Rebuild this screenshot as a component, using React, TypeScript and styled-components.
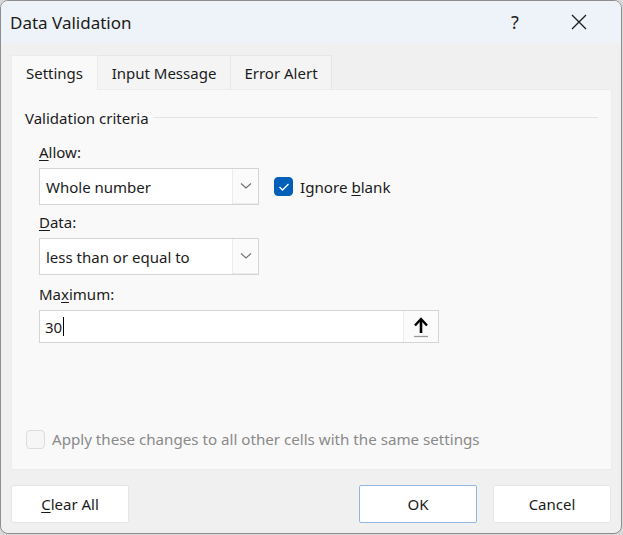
import React from "react";
import styled, { createGlobalStyle } from "styled-components";

const Global = createGlobalStyle`
  html, body { margin: 0; padding: 0; background: #d9d9d9; }
  body { font-family: "Noto Sans", "Open Sans", sans-serif; color: #1b1b1b; }
  * { box-sizing: border-box; }
`;

const Dialog = styled.div`
  width: 622px;
  height: 534px;
  background: #f0f0f0;
  border: 1px solid #8e8e8e;
  border-radius: 8px;
  overflow: hidden;
  display: flex;
  flex-direction: column;
`;

const TitleBar = styled.div`
  height: 42px;
  background: #eef3f9;
  display: flex;
  align-items: center;
  padding-left: 9px;
  padding-right: 10px;
  flex-shrink: 0;
`;

const Title = styled.div`
  font-size: 17px;
  flex: 1;
`;

const TitleButton = styled.div`
  width: 64px;
  height: 42px;
  display: flex;
  align-items: center;
  justify-content: center;
  font-size: 18px;
  color: #222;
`;

const Body = styled.div`
  flex: 1;
  display: flex;
  flex-direction: column;
  padding: 12px 10px 0 10px;
`;

const Tabs = styled.div`
  display: flex;
  height: 34px;
`;

const Tab = styled.div<{ $active?: boolean; $w: number }>`
  width: ${(p) => p.$w}px;
  display: flex;
  align-items: center;
  justify-content: center;
  font-size: 15px;
  background: ${(p) => (p.$active ? "#f9f9f9" : "#f4f4f4")};
  border: 1px solid ${(p) => (p.$active ? "#ececec" : "#e6e6e6")};
  border-bottom: none;
  margin-left: ${(p) => (p.$active ? 0 : -1)}px;
  position: relative;
  z-index: ${(p) => (p.$active ? 2 : 1)};
  ${(p) => (p.$active ? "margin-bottom: -1px; height: 35px;" : "")}
`;

const Panel = styled.div`
  height: 381px;
  width: 601px;
  background: #f9f9f9;
  border: 1px solid #ececec;
  display: flex;
  flex-direction: column;
  padding: 17px 13px 0 13px;
`;

const Legend = styled.div`
  display: flex;
  align-items: center;
  gap: 4px;
  font-size: 15px;
  height: 22px;
`;

const LegendLine = styled.div`
  flex: 1;
  height: 1px;
  background: #e3e3e3;
  margin-top: -2px;
`;

const Fields = styled.div`
  padding-left: 14px;
  display: flex;
  flex-direction: column;
`;

const Label = styled.div<{ $top: number }>`
  font-size: 15px;
  margin-top: ${(p) => p.$top}px;
  height: 22px;
  line-height: 22px;
  margin-bottom: 5px;
  u { text-underline-offset: 2px; }
`;

const Row = styled.div`
  display: flex;
  align-items: center;
  gap: 15px;
`;

const Combo = styled.div`
  width: 220px;
  height: 37px;
  background: #fff;
  border: 1px solid #d4d4d4;
  display: flex;
`;

const ComboText = styled.div`
  flex: 1;
  font-size: 15px;
  display: flex;
  align-items: center;
  padding-left: 6px;
`;

const ComboButton = styled.div`
  width: 26px;
  background: #fbfbfb;
  border-left: 1px solid #ececec;
  border-bottom: 1px solid #ececec;
  display: flex;
  align-items: center;
  justify-content: center;
`;

const Check = styled.div<{ $checked?: boolean }>`
  width: 19px;
  height: 19px;
  border-radius: 4px;
  background: ${(p) => (p.$checked ? "#005fb8" : "#f6f6f6")};
  border: 1px solid ${(p) => (p.$checked ? "#005fb8" : "#dcdcdc")};
  display: flex;
  align-items: center;
  justify-content: center;
  flex-shrink: 0;
`;

const CheckLabel = styled.label<{ $disabled?: boolean }>`
  display: flex;
  align-items: center;
  gap: 7px;
  font-size: 15.15px;
  color: ${(p) => (p.$disabled ? "#8a8a8a" : "#1b1b1b")};
  u { text-underline-offset: 2px; }
`;

const InputBox = styled.div`
  width: 400px;
  height: 33px;
  background: #fff;
  border: 1px solid #d4d4d4;
  display: flex;
`;

const InputText = styled.div`
  flex: 1;
  display: flex;
  align-items: center;
  padding-left: 5px;
  font-size: 15px;
`;

const Caret = styled.span`
  display: inline-block;
  width: 1px;
  height: 19px;
  background: #000;
  margin-left: 1px;
`;

const RefButton = styled.div`
  width: 35px;
  background: #fbfbfb;
  border-left: 1px solid #ececec;
  display: flex;
  align-items: center;
  justify-content: center;
`;

const Spacer = styled.div`
  flex: 1;
`;

const ApplyRow = styled.div`
  padding: 0 0 20px 1px;
`;

const Footer = styled.div`
  display: flex;
  align-items: flex-start;
  padding-top: 15px;
`;

const Button = styled.div<{ $primary?: boolean; $gap?: number }>`
  width: 118px;
  height: 38px;
  margin-left: ${(p) => p.$gap ?? 0}px;
  background: #fff;
  border: 1px solid ${(p) => (p.$primary ? "#93b8e0" : "#e5e5e5")};
  border-radius: 2px;
  display: flex;
  align-items: center;
  justify-content: center;
  font-size: 15px;
  u { text-underline-offset: 2px; }
`;

const Chevron = () => (
  <svg width="12" height="8" viewBox="0 0 12 8">
    <path d="M1 1.5 L6 6 L11 1.5" fill="none" stroke="#6e6e6e" strokeWidth="1.1" />
  </svg>
);

export default function App() {
  return (
    <>
      <Global />
      <Dialog>
        <TitleBar>
          <Title>Data Validation</Title>
          <TitleButton>?</TitleButton>
          <TitleButton>
            <svg width="18" height="18" viewBox="0 0 18 18">
              <path d="M2 2 L16 16 M16 2 L2 16" stroke="#1b1b1b" strokeWidth="1.3" />
            </svg>
          </TitleButton>
        </TitleBar>
        <Body>
          <Tabs>
            <Tab $active $w={87}>Settings</Tab>
            <Tab $w={134}>Input Message</Tab>
            <Tab $w={102}>Error Alert</Tab>
          </Tabs>
          <Panel>
            <Legend>
              Validation criteria
              <LegendLine />
            </Legend>
            <Fields>
              <Label $top={12}>
                <u>A</u>llow:
              </Label>
              <Row>
                <Combo>
                  <ComboText>Whole number</ComboText>
                  <ComboButton>
                    <Chevron />
                  </ComboButton>
                </Combo>
                <CheckLabel>
                  <Check $checked>
                    <svg width="12" height="10" viewBox="0 0 12 10">
                      <path d="M1.5 5 L4.5 8 L10.5 2" fill="none" stroke="#fff" strokeWidth="1.3" />
                    </svg>
                  </Check>
                  <span>
                    Ignore <u>b</u>lank
                  </span>
                </CheckLabel>
              </Row>
              <Label $top={6}>
                <u>D</u>ata:
              </Label>
              <Combo>
                <ComboText>less than or equal to</ComboText>
                <ComboButton>
                  <Chevron />
                </ComboButton>
              </Combo>
              <Label $top={8}>
                Ma<u>x</u>imum:
              </Label>
              <InputBox>
                <InputText>
                  30
                  <Caret />
                </InputText>
                <RefButton>
                  <svg width="18" height="22" viewBox="0 0 18 22">
                    <path d="M9 17 V4" stroke="#000" strokeWidth="2.6" />
                    <path d="M3 9.5 L9 3 L15 9.5" fill="none" stroke="#000" strokeWidth="2.4" />
                    <path d="M2 20.5 H16" stroke="#9a9a9a" strokeWidth="1.3" />
                  </svg>
                </RefButton>
              </InputBox>
            </Fields>
            <Spacer />
            <ApplyRow>
              <CheckLabel $disabled>
                <Check />
                <span>Apply these changes to all other cells with the same settings</span>
              </CheckLabel>
            </ApplyRow>
          </Panel>
          <Footer>
            <Button>
              <span>
                <u>C</u>lear All
              </span>
            </Button>
            <Spacer />
            <Button $primary>OK</Button>
            <Button $gap={16}>Cancel</Button>
          </Footer>
        </Body>
      </Dialog>
    </>
  );
}
